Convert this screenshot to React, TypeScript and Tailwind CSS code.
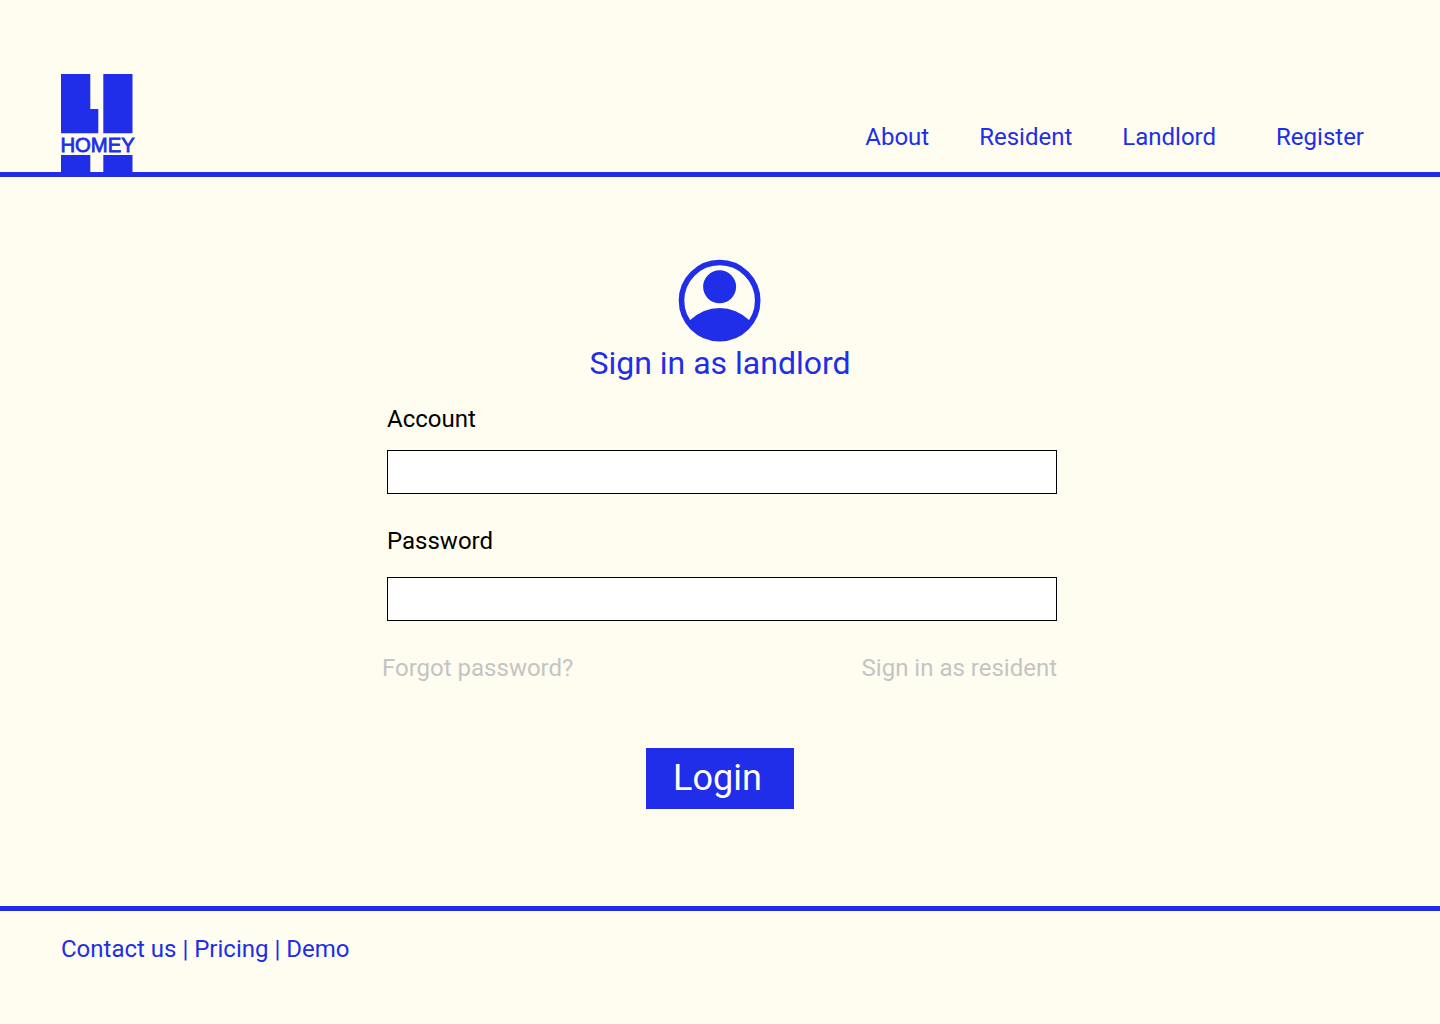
import React from "react";

function Logo() {
  return (
    <svg viewBox="0 0 76 98" className="block h-[98px] w-[76px]" fill="#212EE9" role="img" aria-label="Homey">
      <path d="M0 0H29.3V35H37.3V59.3H0Z" />
      <path d="M42.3 0H71.5V59.3H42.3Z" />
      <path d="M0 81H29.3V98H0Z" />
      <path d="M42.3 81H71.5V98H42.3Z" />
      <text
        x="-0.6"
        y="78"
        fontSize="20.3"
        fontFamily='"Liberation Sans", Arial, sans-serif'
        stroke="#212EE9"
        strokeWidth="0.8"
      >
        HOMEY
      </text>
    </svg>
  );
}

function UserIcon() {
  return (
    <svg viewBox="0 0 82 82" className="block size-[82px] overflow-visible" aria-hidden="true">
      <defs>
        <clipPath id="user-disc">
          <circle cx="40.6" cy="40.6" r="40" />
        </clipPath>
      </defs>
      <circle cx="40.6" cy="40.6" r="38.1" fill="none" stroke="#212EE9" strokeWidth="5.6" />
      <circle cx="40.6" cy="26.8" r="16.5" fill="#212EE9" />
      <circle cx="40.6" cy="90" r="42" fill="#212EE9" clipPath="url(#user-disc)" />
    </svg>
  );
}

function Field({ id, label, type, className }: { id: string; label: string; type: string; className: string }) {
  return (
    <div className={`flex flex-col pr-px pl-[5px] ${className}`}>
      <label htmlFor={id} className="text-black">
        {label}
      </label>
      <input id={id} type={type} className="h-11 w-full border border-black bg-white px-3 text-black" />
    </div>
  );
}

export default function App() {
  return (
    <div className="flex min-h-screen flex-col bg-[#FFFDF0] font-['Roboto',sans-serif] text-2xl/7 text-[#212EE9]">
      <header className="flex items-end justify-between border-b-5 border-[#212EE9] pt-[74px] pr-[76px] pl-[61px]">
        <a href="#home">
          <Logo />
        </a>
        <nav className="flex gap-[50px] pb-[21px]">
          <a href="#about">About</a>
          <a href="#resident">Resident</a>
          <a href="#landlord">Landlord</a>
          <a href="#register" className="ml-2.5">
            Register
          </a>
        </nav>
      </header>

      <main className="flex grow flex-col items-center px-6 pt-[83px] pb-[97px]">
        <UserIcon />
        <h1 className="mt-0.5 text-[32px]/[38px]">Sign in as landlord</h1>
        <form className="mt-[23px] flex w-full max-w-[676px] flex-col" onSubmit={(e) => e.preventDefault()}>
          <Field id="account" label="Account" type="text" className="gap-[17px]" />
          <Field id="password" label="Password" type="password" className="mt-[33px] gap-[22px]" />
          <div className="mt-[33px] flex justify-between pr-px text-[#C4C4C4]">
            <a href="#forgot">Forgot password?</a>
            <a href="#sign-in-resident">Sign in as resident</a>
          </div>
          <button type="submit" className="mt-[66px] self-center bg-[#212EE9] pt-[9px] pr-8 pb-2.5 pl-[27px] text-4xl/[42px] text-white">
            Login
          </button>
        </form>
      </main>

      <footer className="border-t-5 border-[#212EE9] px-[61px] pt-6 pb-[61px]">
        <a href="#contact">Contact us</a> | <a href="#pricing">Pricing</a> | <a href="#demo">Demo</a>
      </footer>
    </div>
  );
}
